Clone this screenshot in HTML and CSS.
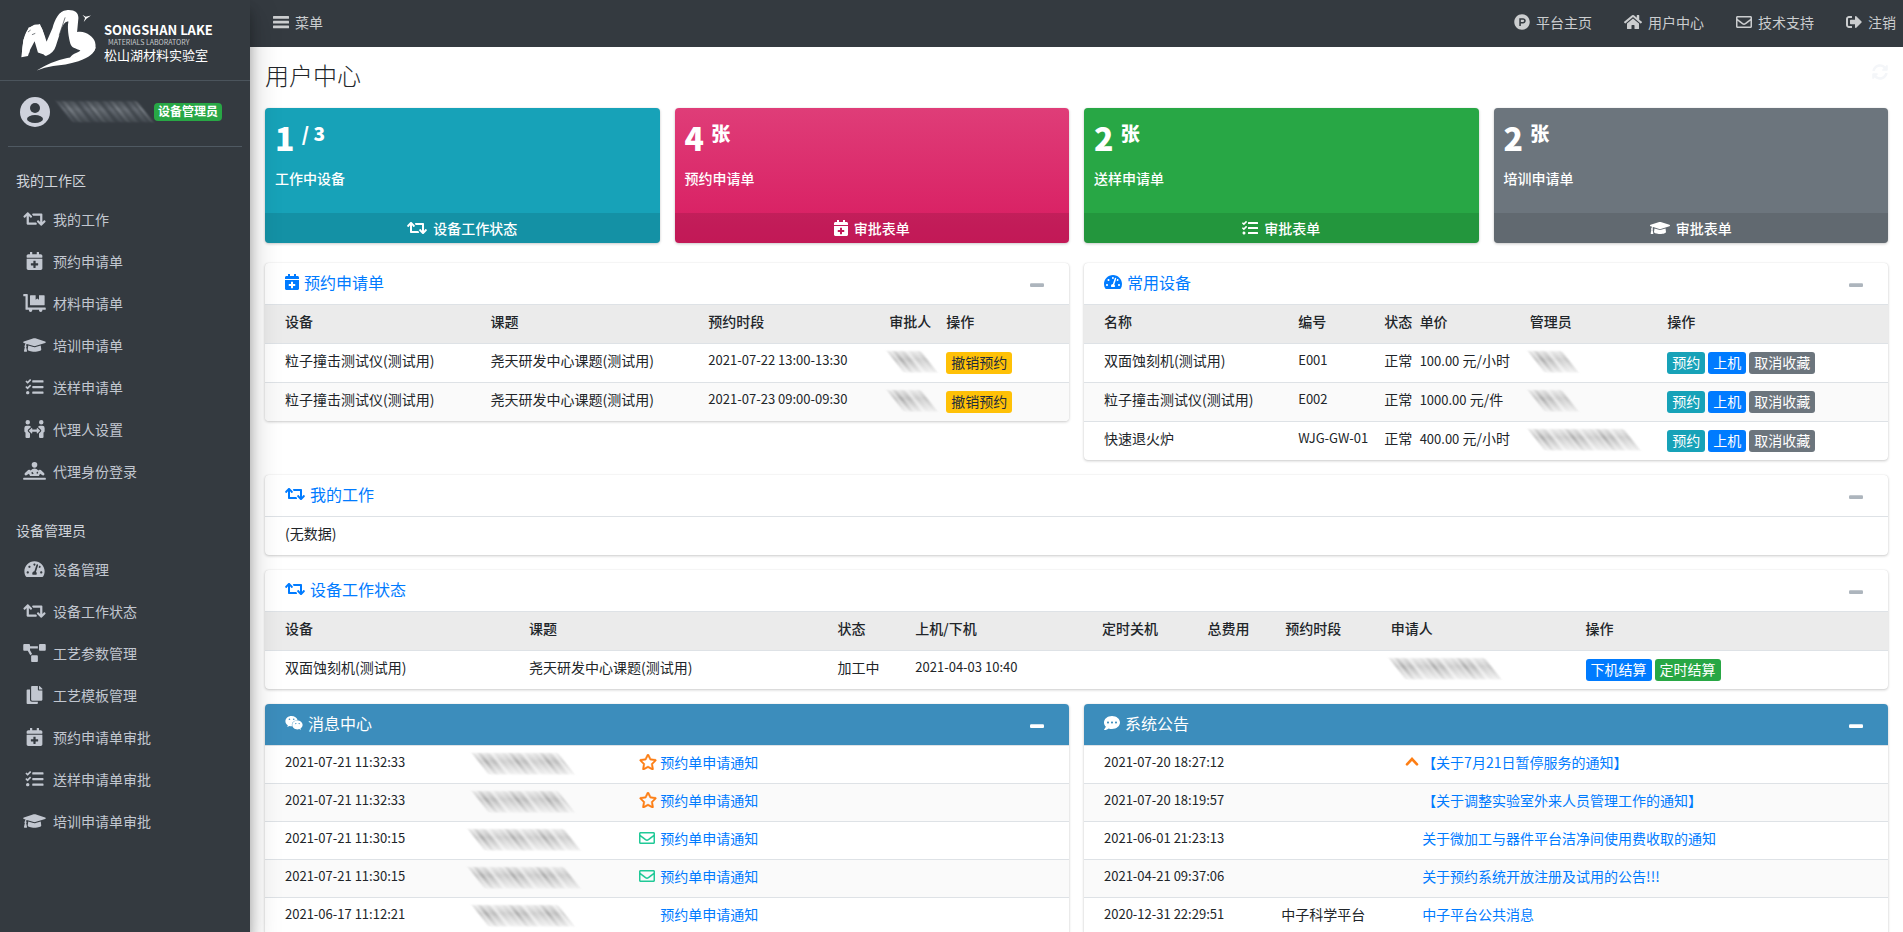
FILE: index.html
```html
<!DOCTYPE html>
<html lang="zh-CN">
<head>
<meta charset="utf-8">
<title>用户中心</title>
<link rel="stylesheet" href="styles.css">
</head>
<body>
<svg class="sprite" aria-hidden="true">
  <symbol id="retweet" viewBox="0 0 640 512"><path d="M629.657 343.598L528.971 444.284c-9.373 9.372-24.568 9.372-33.941 0L394.343 343.598c-9.373-9.373-9.373-24.569 0-33.941l10.823-10.823c9.562-9.562 25.133-9.34 34.419.492L480 342.118V160H292.451a24.005 24.005 0 0 1-16.971-7.029l-16-16C244.361 121.851 255.069 96 276.451 96H520c13.255 0 24 10.745 24 24v222.118l40.416-42.792c9.285-9.831 24.856-10.054 34.419-.492l10.823 10.823c9.372 9.372 9.372 24.569-.001 33.941zm-265.138 15.431A23.999 23.999 0 0 0 347.548 352H160V169.881l40.416 42.792c9.286 9.831 24.856 10.054 34.419.491l10.822-10.822c9.373-9.373 9.373-24.569 0-33.941L144.971 67.716c-9.373-9.373-24.569-9.373-33.941 0L10.343 168.402c-9.373 9.373-9.373 24.569 0 33.941l10.822 10.822c9.562 9.562 25.133 9.34 34.419-.491L96 169.881V392c0 13.255 10.745 24 24 24h243.549c21.382 0 32.09-25.851 16.971-40.971l-16.001-16z"/></symbol>
  <symbol id="calendar" viewBox="0 0 448 512"><path d="M436 160H12c-6.6 0-12-5.4-12-12v-36c0-26.5 21.5-48 48-48h48V12c0-6.6 5.4-12 12-12h40c6.6 0 12 5.4 12 12v52h128V12c0-6.6 5.4-12 12-12h40c6.6 0 12 5.4 12 12v52h48c26.5 0 48 21.5 48 48v36c0 6.6-5.4 12-12 12zM12 192h424c6.6 0 12 5.4 12 12v260c0 26.5-21.5 48-48 48H48c-26.5 0-48-21.5-48-48V204c0-6.6 5.4-12 12-12zm316 140c0-6.6-5.4-12-12-12h-60v-60c0-6.6-5.4-12-12-12h-40c-6.6 0-12 5.4-12 12v60h-60c-6.6 0-12 5.4-12 12v40c0 6.6 5.4 12 12 12h60v60c0 6.6 5.4 12 12 12h40c6.6 0 12-5.4 12-12v-60h60c6.6 0 12-5.4 12-12v-40z"/></symbol>
  <symbol id="dolly" viewBox="0 0 640 512"><path d="M208 320h384c8.800 0 16-7.200 16-16V48c0-8.800-7.200-16-16-16H448v128l-48-32-48 32V32H208c-8.800 0-16 7.200-16 16v256c0 8.800 7.200 16 16 16zm416 64H128V16c0-8.800-7.200-16-16-16H16C7.200 0 0 7.200 0 16v32c0 8.800 7.200 16 16 16h48v368c0 8.800 7.200 16 16 16h82.900c-1.800 5-2.900 10.400-2.900 16 0 26.500 21.500 48 48 48s48-21.500 48-48c0-5.600-1.200-11-2.900-16H451c-1.800 5-2.900 10.400-2.900 16 0 26.500 21.500 48 48 48s48-21.500 48-48c0-5.600-1.200-11-2.900-16H624c8.800 0 16-7.200 16-16v-32c0-8.800-7.200-16-16-16z"/></symbol>
  <symbol id="cap" viewBox="0 0 640 512"><path d="M622.340 153.200L343.400 67.500c-15.200-4.670-31.600-4.670-46.790 0L17.660 153.200c-23.540 7.230-23.540 38.360 0 45.590l48.630 14.940c-10.670 13.190-17.230 29.280-17.880 46.900C38.780 266.150 32 276.110 32 288c0 10.780 5.680 19.850 13.860 25.650L20.330 428.530C18.110 438.520 25.710 448 35.940 448h56.110c10.240 0 17.840-9.480 15.620-19.470L82.140 313.650C90.320 307.850 96 298.780 96 288c0-11.570-6.470-21.250-15.660-26.870.76-15.020 8.440-28.300 20.690-36.720L296.600 284.500c9.060 2.780 26.440 6.250 46.790 0l278.950-85.700c23.550-7.240 23.550-38.360 0-45.600zM352.790 315.090c-28.530 8.760-52.840 3.920-65.590 0l-145.020-44.550L128 384c0 35.350 85.960 64 192 64s192-28.650 192-64l-14.180-113.470-145.030 44.560z"/></symbol>
  <symbol id="tasks" viewBox="0 0 512 512"><path d="M139.610 35.500a12 12 0 0 0-17 0L58.930 98.810l-22.700-22.120a12 12 0 0 0-17 0L3.530 92.410a12 12 0 0 0 0 17l47.590 47.400a12.780 12.780 0 0 0 17.610 0l15.590-15.620L156.520 69a12.090 12.090 0 0 0 .09-17zm0 159.190a12 12 0 0 0-17 0l-63.680 63.720-22.700-22.100a12 12 0 0 0-17 0L3.530 252a12 12 0 0 0 0 17L51 316.500a12.770 12.770 0 0 0 17.600 0l15.700-15.690 72.200-72.220a12 12 0 0 0 .09-16.900zM64 368c-26.490 0-48.590 21.500-48.590 48S37.530 464 64 464a48 48 0 0 0 0-96zm432 16H208a16 16 0 0 0-16 16v32a16 16 0 0 0 16 16h288a16 16 0 0 0 16-16v-32a16 16 0 0 0-16-16zm0-320H208a16 16 0 0 0-16 16v32a16 16 0 0 0 16 16h288a16 16 0 0 0 16-16V80a16 16 0 0 0-16-16zm0 160H208a16 16 0 0 0-16 16v32a16 16 0 0 0 16 16h288a16 16 0 0 0 16-16v-32a16 16 0 0 0-16-16z"/></symbol>
  <symbol id="people" viewBox="0 0 576 512"><path d="M96 128A64 64 0 1 0 32 64a64 64 0 0 0 64 64zm0 176.080a44.110 44.110 0 0 1 13.640-32L181.770 204c1.650-1.550 3.770-2.310 5.610-3.570A63.910 63.910 0 0 0 128 160H64A64 64 0 0 0 0 224v96a32 32 0 0 0 32 32v128a32 32 0 0 0 32 32h64a32 32 0 0 0 32-32V383.610l-50.360-47.530A44.080 44.080 0 0 1 96 304.080zM480 128a64 64 0 1 0-64-64 64 64 0 0 0 64 64zm32 32h-64a63.910 63.910 0 0 0-59.380 40.420c1.840 1.270 4 2 5.620 3.590l72.120 68.060a44.370 44.370 0 0 1 0 64L416 383.620V480a32 32 0 0 0 32 32h64a32 32 0 0 0 32-32V352a32 32 0 0 0 32-32v-96a64 64 0 0 0-64-64zM444.400 295.340l-72.120-68.060A12 12 0 0 0 352 236v36H224v-36a12 12 0 0 0-20.280-8.730L131.600 295.340a12.400 12.400 0 0 0 0 17.470l72.120 68.070A12 12 0 0 0 224 372.140V336h128v36.140a12 12 0 0 0 20.280 8.740l72.120-68.070a12.400 12.400 0 0 0 0-17.470z"/></symbol>
  <symbol id="counter" viewBox="0 0 640 512"><circle cx="320" cy="80" r="80"/><path fill-rule="evenodd" d="M46 372q-24-30 4-62l90-82q18-16 38-8l34 24q46-60 108-60t108 60l34-24q20-8 38 8l90 82q28 32 4 62-20 20-46 4l-70-42-34 66H196l-34-66-70 42q-26 16-46-4zM224 310l44 40 28-20-40-52zm150-6 30-36 24 40-34 30z"/><rect y="448" width="640" height="60" rx="16"/></symbol>
  <symbol id="gauge" viewBox="0 0 576 512"><path d="M288 32C128.940 32 0 160.940 0 320c0 52.800 14.250 102.260 39.060 144.800 5.610 9.620 16.300 15.200 27.440 15.200h443c11.140 0 21.830-5.580 27.440-15.200C561.750 422.260 576 372.800 576 320c0-159.060-128.940-288-288-288zm0 64c14.710 0 26.580 10.130 30.320 23.650-1.110 2.260-2.640 4.230-3.450 6.670l-9.220 27.670c-5.130 3.490-10.970 6.010-17.640 6.010-17.670 0-32-14.330-32-32S270.330 96 288 96zM96 384c-17.670 0-32-14.330-32-32s14.330-32 32-32 32 14.330 32 32-14.330 32-32 32zm48-160c-17.670 0-32-14.330-32-32s14.330-32 32-32 32 14.330 32 32-14.330 32-32 32zm246.770-72.410l-61.330 184C343.130 347.330 352 364.540 352 384c0 11.720-3.380 22.550-8.880 32H232.880c-5.500-9.450-8.880-20.280-8.880-32 0-33.940 26.500-61.430 59.900-63.590l61.340-184.010c4.170-12.560 17.730-19.450 30.360-15.170 12.570 4.190 19.350 17.790 15.170 30.360zm14.660 57.200l15.520-46.550c3.470-1.290 7.130-2.230 11.050-2.230 17.670 0 32 14.330 32 32s-14.330 32-32 32c-11.380-.010-20.890-6.280-26.570-15.220zM480 384c-17.670 0-32-14.330-32-32s14.330-32 32-32 32 14.330 32 32-14.330 32-32 32z"/></symbol>
  <symbol id="diagram" viewBox="0 0 640 512"><path d="M384 320H256c-17.670 0-32 14.330-32 32v128c0 17.670 14.330 32 32 32h128c17.670 0 32-14.330 32-32V352c0-17.670-14.330-32-32-32zM192 32c0-17.670-14.330-32-32-32H32C14.330 0 0 14.330 0 32v128c0 17.670 14.330 32 32 32h95.720l73.160 128.040C211.980 300.980 232.400 288 256 288h.28L192 175.510V128h224V64H192V32zM608 0H480c-17.670 0-32 14.330-32 32v128c0 17.670 14.330 32 32 32h128c17.670 0 32-14.330 32-32V32c0-17.670-14.330-32-32-32z"/></symbol>
  <symbol id="copy" viewBox="0 0 448 512"><path d="M320 448v40c0 13.255-10.745 24-24 24H24c-13.255 0-24-10.745-24-24V120c0-13.255 10.745-24 24-24h72v296c0 30.879 25.121 56 56 56h168zm0-344V0H152c-13.255 0-24 10.745-24 24v368c0 13.255 10.745 24 24 24h272c13.255 0 24-10.745 24-24V128H344c-13.200 0-24-10.800-24-24zm120.971-31.029L375.029 7.029A24 24 0 0 0 358.059 0H352v96h96v-6.059a24 24 0 0 0-7.029-16.970z"/></symbol>
  <symbol id="home" viewBox="0 0 576 512"><path d="M280.370 148.260L96 300.110V464a16 16 0 0 0 16 16l112.060-.29a16 16 0 0 0 15.920-16V368a16 16 0 0 1 16-16h64a16 16 0 0 1 16 16v95.640a16 16 0 0 0 16 16.050L464 480a16 16 0 0 0 16-16V300L295.670 148.260a12.190 12.190 0 0 0-15.300 0zM571.600 251.470L488 182.560V44.050a12 12 0 0 0-12-12h-56a12 12 0 0 0-12 12v72.610L318.470 43a48 48 0 0 0-61 0L4.340 251.470a12 12 0 0 0-1.600 16.900l25.500 31A12 12 0 0 0 45.150 301l235.220-193.740a12.190 12.190 0 0 1 15.300 0L530.900 301a12 12 0 0 0 16.900-1.600l25.500-31a12 12 0 0 0-1.700-16.930z"/></symbol>
  <symbol id="mail" viewBox="0 0 512 512"><path d="M464 64H48C21.490 64 0 85.490 0 112v288c0 26.510 21.490 48 48 48h416c26.510 0 48-21.490 48-48V112c0-26.510-21.490-48-48-48zm0 48v40.805c-22.422 18.259-58.168 46.651-134.587 106.490-16.841 13.247-50.201 45.072-73.413 44.701-23.208.375-56.579-31.459-73.413-44.701C106.180 199.465 70.425 171.067 48 152.805V112h416zM48 400V214.398c22.914 18.251 55.409 43.862 104.938 82.646 21.857 17.205 60.134 55.186 103.062 54.955 42.717.231 80.509-37.199 103.053-54.947 49.528-38.783 82.032-64.401 104.947-82.653V400H48z"/></symbol>
  <symbol id="exit" viewBox="0 0 512 512"><path d="M497 273L329 441c-15 15-41 4.500-41-17v-96H152c-13.300 0-24-10.700-24-24v-96c0-13.300 10.700-24 24-24h136V88c0-21.400 25.900-32 41-17l168 168c9.300 9.400 9.300 24.600 0 34zM192 436v-40c0-6.600-5.400-12-12-12H96c-17.700 0-32-14.300-32-32V160c0-17.700 14.300-32 32-32h84c6.600 0 12-5.400 12-12V76c0-6.600-5.400-12-12-12H96c-53 0-96 43-96 96v192c0 53 43 96 96 96h84c6.600 0 12-5.400 12-12z"/></symbol>
  <symbol id="star" viewBox="0 0 576 512"><path stroke="currentColor" stroke-width="14" d="M528.100 171.500L382 150.200 316.700 17.800c-11.700-23.600-45.600-23.900-57.400 0L194 150.200 47.900 171.500c-26.200 3.800-36.700 36.100-17.700 54.600l105.700 103-25 145.500c-4.500 26.300 23.200 46 46.400 33.700L288 439.600l130.700 68.700c23.200 12.200 50.900-7.400 46.400-33.700l-25-145.500 105.700-103c19-18.500 8.500-50.800-17.700-54.600zM388.600 312.300l23.700 138.400L288 385.400l-124.300 65.300 23.700-138.400-100.600-98 139-20.200 62.200-126 62.200 126 139 20.200-100.600 98z"/></symbol>
  <symbol id="bars" viewBox="0 0 512 512"><rect y="60" width="512" height="88" rx="16"/><rect y="212" width="512" height="88" rx="16"/><rect y="364" width="512" height="88" rx="16"/></symbol>
  <symbol id="platform" viewBox="0 0 512 512"><path d="M326.300 218.800c0 20.500-16.700 37.200-37.200 37.200h-70.300v-74.400h70.300c20.500 0 37.200 16.700 37.200 37.200zM504 256c0 137-111 248-248 248S8 393 8 256 119 8 256 8s248 111 248 248zm-128.100-37.200c0-47.900-38.900-86.800-86.800-86.800H169.200v248h49.600v-74.400h70.300c47.900 0 86.800-38.900 86.800-86.800z"/></symbol>
  <symbol id="sync" viewBox="0 0 512 512"><path d="M370.720 133.280C339.458 104.008 298.888 87.962 255.848 88c-77.458.068-144.328 53.178-162.791 126.850-1.344 5.363-6.122 9.150-11.651 9.150H24.103c-7.498 0-13.194-6.807-11.807-14.176C33.933 94.924 134.813 8 256 8c66.448 0 126.791 26.136 171.315 68.685L463.030 40.970C478.149 25.851 504 36.559 504 57.941V192c0 13.255-10.745 24-24 24H345.941c-21.382 0-32.090-25.851-16.971-40.971l41.750-41.749zM32 296h134.059c21.382 0 32.090 25.851 16.971 40.971l-41.750 41.750c31.262 29.273 71.835 45.319 114.876 45.280 77.418-.070 144.315-53.144 162.787-126.849 1.344-5.363 6.122-9.150 11.651-9.150h57.304c7.498 0 13.194 6.807 11.807 14.176C478.067 417.076 377.187 504 256 504c-66.448 0-126.791-26.136-171.315-68.685L48.970 471.030C33.851 486.149 8 475.441 8 454.059V320c0-13.255 10.745-24 24-24z"/></symbol>
  <symbol id="weixin" viewBox="0 0 576 512"><path d="M385.200 167.600c6.400 0 12.600.3 18.800 1.100C387.400 90.300 303.300 32 207.700 32 100.500 32 13 104.800 13 197.400c0 53.400 29.300 97.500 77.900 131.600l-19.300 58.600 68-34.100c24.400 4.800 43.800 9.700 68.200 9.700 6.200 0 12.100-.3 18.300-.8-4-12.900-6.200-26.600-6.200-40.800-.1-84.900 72.900-154 165.300-154zm-104.500-52.900c14.500 0 24.200 9.700 24.200 24.400 0 14.500-9.700 24.200-24.200 24.200-14.800 0-29.300-9.700-29.300-24.200.1-14.700 14.600-24.400 29.300-24.400zm-136.400 48.600c-14.500 0-29.300-9.700-29.300-24.200 0-14.800 14.800-24.400 29.300-24.400 14.800 0 24.400 9.700 24.400 24.400 0 14.600-9.600 24.200-24.400 24.200zM563 319.400c0-77.900-77.900-141.300-165.400-141.300-92.700 0-165.400 63.400-165.400 141.300S305 460.700 397.600 460.700c19.300 0 38.900-5.100 58.600-9.900l53.400 29.300-14.800-48.600C534 402.100 563 363.200 563 319.400zm-219.100-24.500c-9.700 0-19.300-9.700-19.300-19.600 0-9.700 9.700-19.300 19.300-19.300 14.800 0 24.400 9.700 24.400 19.300 0 10-9.700 19.600-24.400 19.600zm107.100 0c-9.700 0-19.300-9.700-19.300-19.600 0-9.700 9.700-19.300 19.300-19.300 14.500 0 24.400 9.700 24.400 19.300.1 10-9.900 19.600-24.400 19.600z"/></symbol>
  <symbol id="comment" viewBox="0 0 512 512"><path d="M256 32C114.600 32 0 125.100 0 240c0 49.600 21.400 95 57 130.700C44.500 421.100 2.700 466 2.200 466.500c-2.200 2.300-2.800 5.700-1.500 8.700S4.800 480 8 480c66.300 0 116-31.800 140.600-51.400 32.700 12.300 69 19.400 107.400 19.400 141.400 0 256-93.100 256-208S397.400 32 256 32zM128 272c-17.700 0-32-14.300-32-32s14.300-32 32-32 32 14.300 32 32-14.300 32-32 32zm128 0c-17.700 0-32-14.300-32-32s14.300-32 32-32 32 14.300 32 32-14.300 32-32 32zm128 0c-17.700 0-32-14.300-32-32s14.300-32 32-32 32 14.300 32 32-14.300 32-32 32z"/></symbol>
  <symbol id="minus" viewBox="0 0 448 512"><rect y="196" width="448" height="124" rx="36"/></symbol>
  <symbol id="up" viewBox="0 0 448 512"><path d="M64 330 224 160l160 170" fill="none" stroke="currentColor" stroke-width="84" stroke-linecap="round"/></symbol>
</svg>
<div class="app">
  <aside class="sidebar">
    <a class="brand" href="#">
      <svg class="brand-mark" viewBox="60 24 232 192" aria-hidden="true">
        <path d="M77 158C80 116 86 94 106 85C124 80 119 122 134 150" fill="none" stroke="#fff" stroke-width="22"/>
        <path d="M64 172l6-52 16-38 34-10 14 34 12 38-14 20-18-6-10-34-14 26-6 18zM138 168c-14-4-10-20 0-38L158 84C164 60 178 30 200 30c24-2 36 6 36 24l-4 42c24-6 50 14 54 30 6 24-4 34-24 36-20 6-44 8-52 16 2-16 24-18 32-26-14-8-24-6-30-20-6-22-10-50-6-68-10 0-16 8-22 24l-16 50c-4 14-14 24-30 30z" fill="#fff"/>
        <path d="M110 212q44-28 92-38 50-6 62-30l24-2q-4 26-52 42-40 12-76 14-26 4-50 14zM248 44l10 6 16-4-14 10-8 10 4-12z" fill="#fff"/>
        <path d="M96 104l10-4M84 96l8-6M196 52l-18 54M204 150l16 4" stroke="#343a40" stroke-width="2"/>
      </svg>
      <span class="brand-text">
        <strong class="brand-en">SONGSHAN LAKE</strong>
        <span class="brand-sub">MATERIALS LABORATORY</span>
        <span class="brand-cn">松山湖材料实验室</span>
      </span>
    </a>
    <div class="user">
      <svg class="avatar" viewBox="0 0 30 30" aria-hidden="true"><circle cx="15" cy="15" r="15" fill="#cfd2dc"/><circle cx="15" cy="11" r="5" fill="#343a40"/><ellipse cx="15" cy="22" rx="8" ry="4" fill="#343a40"/></svg>
      <span class="smudge smudge-dark w-name"></span>
      <span class="role">设备管理员</span>
    </div>
    <nav class="menu">
      <h2 class="menu-title">我的工作区</h2>
      <a class="menu-item" href="#"><svg class="icon"><use href="#retweet"/></svg>我的工作</a>
      <a class="menu-item" href="#"><svg class="icon"><use href="#calendar"/></svg>预约申请单</a>
      <a class="menu-item" href="#"><svg class="icon"><use href="#dolly"/></svg>材料申请单</a>
      <a class="menu-item" href="#"><svg class="icon"><use href="#cap"/></svg>培训申请单</a>
      <a class="menu-item" href="#"><svg class="icon"><use href="#tasks"/></svg>送样申请单</a>
      <a class="menu-item" href="#"><svg class="icon"><use href="#people"/></svg>代理人设置</a>
      <a class="menu-item" href="#"><svg class="icon"><use href="#counter"/></svg>代理身份登录</a>
      <h2 class="menu-title">设备管理员</h2>
      <a class="menu-item" href="#"><svg class="icon"><use href="#gauge"/></svg>设备管理</a>
      <a class="menu-item" href="#"><svg class="icon"><use href="#retweet"/></svg>设备工作状态</a>
      <a class="menu-item" href="#"><svg class="icon"><use href="#diagram"/></svg>工艺参数管理</a>
      <a class="menu-item" href="#"><svg class="icon"><use href="#copy"/></svg>工艺模板管理</a>
      <a class="menu-item" href="#"><svg class="icon"><use href="#calendar"/></svg>预约申请单审批</a>
      <a class="menu-item" href="#"><svg class="icon"><use href="#tasks"/></svg>送样申请单审批</a>
      <a class="menu-item" href="#"><svg class="icon"><use href="#cap"/></svg>培训申请单审批</a>
    </nav>
  </aside>
  <div class="page">
    <header class="topbar">
      <a class="top-link" href="#"><svg class="icon i-16"><use href="#bars"/></svg>菜单</a>
      <nav class="top-nav">
        <a class="top-link" href="#"><svg class="icon i-16"><use href="#platform"/></svg>平台主页</a>
        <a class="top-link" href="#"><svg class="icon i-18"><use href="#home"/></svg>用户中心</a>
        <a class="top-link" href="#"><svg class="icon i-16"><use href="#mail"/></svg>技术支持</a>
        <a class="top-link" href="#"><svg class="icon i-16"><use href="#exit"/></svg>注销</a>
      </nav>
    </header>
    <main class="content">
      <div class="page-head">
        <h1 class="page-title">用户中心</h1>
        <button class="refresh" type="button" aria-label="刷新"><svg class="icon i-16"><use href="#sync"/></svg></button>
      </div>
      <section class="boxes">
        <article class="box box-info">
          <div class="box-body"><p class="box-num">1 <sup>/ 3</sup></p><p class="box-label">工作中设备</p></div>
          <a class="box-foot" href="#"><svg class="icon i-20"><use href="#retweet"/></svg>设备工作状态</a>
        </article>
        <article class="box box-maroon">
          <div class="box-body"><p class="box-num">4 <sup>张</sup></p><p class="box-label">预约申请单</p></div>
          <a class="box-foot" href="#"><svg class="icon i-14"><use href="#calendar"/></svg>审批表单</a>
        </article>
        <article class="box box-success">
          <div class="box-body"><p class="box-num">2 <sup>张</sup></p><p class="box-label">送样申请单</p></div>
          <a class="box-foot" href="#"><svg class="icon i-16"><use href="#tasks"/></svg>审批表单</a>
        </article>
        <article class="box box-gray">
          <div class="box-body"><p class="box-num">2 <sup>张</sup></p><p class="box-label">培训申请单</p></div>
          <a class="box-foot" href="#"><svg class="icon i-20"><use href="#cap"/></svg>审批表单</a>
        </article>
      </section>

      <div class="pair">
        <section class="card">
          <header class="card-head">
            <h2 class="card-title"><svg class="icon i-14"><use href="#calendar"/></svg>预约申请单</h2>
            <button class="collapse" type="button" aria-label="折叠"><svg class="icon i-14"><use href="#minus"/></svg></button>
          </header>
          <table class="grid t-book">
            <colgroup><col><col><col><col><col></colgroup>
            <thead><tr><th>设备</th><th>课题</th><th>预约时段</th><th>审批人</th><th>操作</th></tr></thead>
            <tbody>
              <tr><td>粒子撞击测试仪(测试用)</td><td>尧天研发中心课题(测试用)</td><td class="num">2021-07-22 13:00-13:30</td><td><span class="smudge w-short"></span></td><td class="act"><button class="btn yellow" type="button">撤销预约</button></td></tr>
              <tr><td>粒子撞击测试仪(测试用)</td><td>尧天研发中心课题(测试用)</td><td class="num">2021-07-23 09:00-09:30</td><td><span class="smudge w-short"></span></td><td class="act"><button class="btn yellow" type="button">撤销预约</button></td></tr>
            </tbody>
          </table>
        </section>
        <section class="card">
          <header class="card-head">
            <h2 class="card-title"><svg class="icon i-18"><use href="#gauge"/></svg>常用设备</h2>
            <button class="collapse" type="button" aria-label="折叠"><svg class="icon i-14"><use href="#minus"/></svg></button>
          </header>
          <table class="grid t-dev">
            <colgroup><col><col><col><col><col><col></colgroup>
            <thead><tr><th>名称</th><th>编号</th><th>状态</th><th>单价</th><th>管理员</th><th>操作</th></tr></thead>
            <tbody>
              <tr><td>双面蚀刻机(测试用)</td><td class="num">E001</td><td>正常</td><td><span class="num">100.00</span> 元/小时</td><td><span class="smudge w-short"></span></td><td class="act"><div class="btns"><button class="btn teal" type="button">预约</button><button class="btn blue" type="button">上机</button><button class="btn gray" type="button">取消收藏</button></div></td></tr>
              <tr><td>粒子撞击测试仪(测试用)</td><td class="num">E002</td><td>正常</td><td><span class="num">1000.00</span> 元/件</td><td><span class="smudge w-short"></span></td><td class="act"><div class="btns"><button class="btn teal" type="button">预约</button><button class="btn blue" type="button">上机</button><button class="btn gray" type="button">取消收藏</button></div></td></tr>
              <tr><td>快速退火炉</td><td class="num">WJG-GW-01</td><td>正常</td><td><span class="num">400.00</span> 元/小时</td><td><span class="smudge w-long"></span></td><td class="act"><div class="btns"><button class="btn teal" type="button">预约</button><button class="btn blue" type="button">上机</button><button class="btn gray" type="button">取消收藏</button></div></td></tr>
            </tbody>
          </table>
        </section>
      </div>

      <section class="card">
        <header class="card-head">
          <h2 class="card-title"><svg class="icon i-20"><use href="#retweet"/></svg>我的工作</h2>
          <button class="collapse" type="button" aria-label="折叠"><svg class="icon i-14"><use href="#minus"/></svg></button>
        </header>
        <p class="empty">(无数据)</p>
      </section>

      <section class="card">
        <header class="card-head">
          <h2 class="card-title"><svg class="icon i-20"><use href="#retweet"/></svg>设备工作状态</h2>
          <button class="collapse" type="button" aria-label="折叠"><svg class="icon i-14"><use href="#minus"/></svg></button>
        </header>
        <table class="grid t-state">
          <colgroup><col><col><col><col><col><col><col><col><col></colgroup>
          <thead><tr><th>设备</th><th>课题</th><th>状态</th><th>上机/下机</th><th>定时关机</th><th>总费用</th><th>预约时段</th><th>申请人</th><th>操作</th></tr></thead>
          <tbody>
            <tr><td>双面蚀刻机(测试用)</td><td>尧天研发中心课题(测试用)</td><td>加工中</td><td class="num">2021-04-03 10:40</td><td></td><td></td><td></td><td><span class="smudge w-long"></span></td><td class="act"><div class="btns"><button class="btn blue" type="button">下机结算</button><button class="btn green" type="button">定时结算</button></div></td></tr>
          </tbody>
        </table>
      </section>

      <div class="pair">
        <section class="card card-blue">
          <header class="card-head">
            <h2 class="card-title"><svg class="icon i-18"><use href="#weixin"/></svg>消息中心</h2>
            <button class="collapse" type="button" aria-label="折叠"><svg class="icon i-14"><use href="#minus"/></svg></button>
          </header>
          <table class="grid feed t-msg">
            <colgroup><col><col><col></colgroup>
            <tbody>
              <tr><td class="num">2021-07-21 11:32:33</td><td><span class="smudge w-mid"></span></td><td><a class="note" href="#"><span class="flag orange"><svg class="icon i-18"><use href="#star"/></svg></span>预约单申请通知</a></td></tr>
              <tr><td class="num">2021-07-21 11:32:33</td><td><span class="smudge w-mid"></span></td><td><a class="note" href="#"><span class="flag orange"><svg class="icon i-18"><use href="#star"/></svg></span>预约单申请通知</a></td></tr>
              <tr><td class="num">2021-07-21 11:30:15</td><td><span class="smudge w-long"></span></td><td><a class="note" href="#"><span class="flag mint"><svg class="icon i-16"><use href="#mail"/></svg></span>预约单申请通知</a></td></tr>
              <tr><td class="num">2021-07-21 11:30:15</td><td><span class="smudge w-long"></span></td><td><a class="note" href="#"><span class="flag mint"><svg class="icon i-16"><use href="#mail"/></svg></span>预约单申请通知</a></td></tr>
              <tr><td class="num">2021-06-17 11:12:21</td><td><span class="smudge w-mid"></span></td><td><a class="note" href="#"><span class="flag"></span>预约单申请通知</a></td></tr>
            </tbody>
          </table>
        </section>
        <section class="card card-blue">
          <header class="card-head">
            <h2 class="card-title"><svg class="icon i-16"><use href="#comment"/></svg>系统公告</h2>
            <button class="collapse" type="button" aria-label="折叠"><svg class="icon i-14"><use href="#minus"/></svg></button>
          </header>
          <table class="grid feed t-notice">
            <colgroup><col><col><col></colgroup>
            <tbody>
              <tr><td class="num">2021-07-20 18:27:12</td><td></td><td><a class="note" href="#"><span class="flag flag-end orange"><svg class="icon i-16"><use href="#up"/></svg></span>【关于7月21日暂停服务的通知】</a></td></tr>
              <tr><td class="num">2021-07-20 18:19:57</td><td></td><td><a class="note" href="#"><span class="flag"></span>【关于调整实验室外来人员管理工作的通知】</a></td></tr>
              <tr><td class="num">2021-06-01 21:23:13</td><td></td><td><a class="note" href="#"><span class="flag"></span>关于微加工与器件平台洁净间使用费收取的通知</a></td></tr>
              <tr><td class="num">2021-04-21 09:37:06</td><td></td><td><a class="note" href="#"><span class="flag"></span>关于预约系统开放注册及试用的公告!!!</a></td></tr>
              <tr><td class="num">2020-12-31 22:29:51</td><td>中子科学平台</td><td><a class="note" href="#"><span class="flag"></span>中子平台公共消息</a></td></tr>
            </tbody>
          </table>
        </section>
      </div>
    </main>
  </div>
</div>
</body>
</html>
```
FILE: styles.css
```css
* { box-sizing: border-box; }

body {
  margin: 0;
  font-family: "Noto Sans CJK SC", "Noto Sans", sans-serif;
  font-size: 14px;
  line-height: 20px;
  color: #212529;
  background: #fff;
}

h1, h2, p { margin: 0; font-weight: 400; }
a { color: inherit; text-decoration: none; }
button { font: inherit; border: 0; background: none; cursor: pointer; }

.sprite { display: none; }
.icon { width: 16px; height: 16px; fill: currentColor; flex: none; display: block; }
.i-14 { width: 14px; }
.i-16 { width: 16px; }
.i-18 { width: 18px; }
.i-20 { width: 20px; }

.app { display: flex; height: 100vh; overflow: hidden; }

/* Sidebar */
.sidebar {
  flex: 0 0 250px;
  background: #343a40;
  color: #c2c7d0;
  z-index: 2;
  box-shadow: 0 14px 28px rgba(0, 0, 0, .25), 0 10px 10px rgba(0, 0, 0, .22);
}
.brand {
  display: flex;
  align-items: center;
  gap: 7px;
  height: 81px;
  padding-left: 20px;
  border-bottom: 1px solid #4b545c;
  color: #fff;
}
.brand-mark { width: 77px; height: 64px; flex: none; }
.brand-text { display: flex; flex-direction: column; padding-top: 4px; white-space: nowrap; }
.brand-en { font-size: 13px; line-height: 18px; font-weight: 700; }
.brand-sub { padding-left: 4px; font-size: 7px; line-height: 7px; color: #c6c9cb; }
.brand-cn { font-size: 13px; line-height: 18px; }

.user {
  display: flex;
  align-items: center;
  height: 66px;
  margin: 0 8px;
  padding: 0 0 4px 12px;
  border-bottom: 1px solid #4f5962;
}
.avatar { width: 30px; height: 30px; margin-right: 7px; }
.role {
  margin-left: 2px;
  padding: 0 4px 2px;
  border-radius: 4px;
  background: #28a745;
  color: #fff;
  font-size: 12px;
  line-height: 16px;
  font-weight: 700;
}

.menu-title { padding: 23px 16px 8px; font-size: 14px; line-height: 20px; color: #d0d4db; }
.menu-item { display: flex; align-items: center; gap: 7px; height: 42px; padding-left: 23px; }
.menu-item .icon { width: 23px; height: 18px; }
.menu-item + .menu-title { padding-top: 28px; }

/* Top bar */
.page { flex: 1; min-width: 0; }
.topbar {
  display: flex;
  justify-content: space-between;
  align-items: center;
  height: 47px;
  padding: 0 7px 3px 23px;
  background: #343a40;
  color: #cbcdcf;
}
.top-nav { display: flex; gap: 32px; }
.top-link { display: flex; align-items: center; gap: 6px; }

/* Content */
.content { padding: 0 15px; }
.page-head { display: flex; align-items: center; justify-content: space-between; height: 61px; padding-bottom: 6px; }
.page-title { font-size: 24px; line-height: 32px; font-weight: 300; }
.refresh { padding: 0 0 6px; color: #f4f6f9; }

.boxes { display: grid; grid-template-columns: repeat(4, 1fr); gap: 15px; margin-bottom: 20px; }
.box {
  border-radius: 4px;
  overflow: hidden;
  color: #fff;
  box-shadow: 0 0 1px rgba(0, 0, 0, .13), 0 1px 3px rgba(0, 0, 0, .2);
}
.box-info { background: #17a2b8; }
.box-maroon { background: linear-gradient(#df3d78, #d81b60); }
.box-success { background: #28a745; }
.box-gray { background: #6c757d; }
.box-body { height: 105px; padding: 8px 10px; }
.box-num { font-size: 32px; line-height: 42px; font-weight: 900; margin-bottom: 10px; }
.box-num sup { font-size: 19px; line-height: 20px; vertical-align: 10px; }
.box-label { font-weight: 500; }
.box-foot {
  display: flex;
  align-items: center;
  justify-content: center;
  gap: 6px;
  height: 30px;
  padding-bottom: 1px;
  background: rgba(0, 0, 0, .1);
  font-weight: 500;
}

.pair { display: grid; grid-template-columns: 1fr 1fr; gap: 15px; align-items: start; }
.card {
  min-width: 0;
  margin-bottom: 15px;
  border-radius: 4px;
  background: #fff;
  overflow: hidden;
  box-shadow: 0 0 1px rgba(0, 0, 0, .13), 0 1px 3px rgba(0, 0, 0, .2);
}
.card-head {
  display: flex;
  align-items: center;
  justify-content: space-between;
  height: 41px;
  padding: 0 25px 0 20px;
}
.card-title { display: flex; align-items: center; gap: 5px; padding-bottom: 3px; font-size: 16px; line-height: 24px; color: #007bff; }
.collapse { padding: 3px 0 0; color: #adb5bd; }
.card-blue .card-head { background: #3c8dbc; }
.card-blue .card-title, .card-blue .collapse { color: #fff; }
.empty { height: 39px; padding: 6px 20px; border-top: 1px solid #dee2e6; }

/* Tables */
.grid { width: 100%; table-layout: fixed; border-collapse: separate; border-spacing: 0; }
.grid th, .grid td {
  height: 39px;
  padding: 0 0 6px 6px;
  border-top: 1px solid #dee2e6;
  text-align: left;
  vertical-align: middle;
  white-space: nowrap;
}
.grid th { background: #ebebeb; font-weight: 500; }
.grid th:first-child, .grid td:first-child { padding-left: 20px; }
.grid tbody tr:nth-child(even) { background: #fafafa; }
.grid .act { padding-bottom: 1px; }
.grid.feed td { height: 38px; padding-bottom: 5px; }
.num { font-size: 13px; }

.t-book col:nth-child(1) { width: 27.3%; }
.t-book col:nth-child(2) { width: 27.1%; }
.t-book col:nth-child(3) { width: 22.5%; }
.t-book col:nth-child(4) { width: 7.1%; }

.t-dev col:nth-child(1) { width: 25.9%; }
.t-dev col:nth-child(2) { width: 10.7%; }
.t-dev col:nth-child(3) { width: 4.4%; }
.t-dev col:nth-child(4) { width: 13.7%; }
.t-dev col:nth-child(5) { width: 17.1%; }

.t-state col:nth-child(1) { width: 15.9%; }
.t-state col:nth-child(2) { width: 19%; }
.t-state col:nth-child(3) { width: 4.8%; }
.t-state col:nth-child(4) { width: 11.5%; }
.t-state col:nth-child(5) { width: 6.5%; }
.t-state col:nth-child(6) { width: 4.8%; }
.t-state col:nth-child(7) { width: 6.5%; }
.t-state col:nth-child(8) { width: 12%; }

.t-msg col:nth-child(1) { width: 24.8%; }
.t-msg col:nth-child(2) { width: 21%; }
.t-notice col:nth-child(1) { width: 23.8%; }
.t-notice col:nth-child(2) { width: 14.9%; }

.btns { display: flex; gap: 3px; }
.btn { display: block; height: 22px; padding: 0 5px 2px; border-radius: 3px; line-height: 20px; color: #fff; }
.yellow { background: #ffc107; color: #1f2d3d; }
.teal { background: #17a2b8; }
.blue { background: #007bff; }
.gray { background: #6c757d; }
.green { background: #28a745; }

.note { display: flex; align-items: center; color: #007bff; }
.flag { flex: 0 0 21px; display: flex; }
.flag-end { justify-content: flex-end; padding-right: 2px; }
.orange { color: #fd7e14; }
.mint { color: #20c997; }

/* Redacted names: skewed streaks, softened at the edges */
.smudge {
  display: block;
  height: 21px;
  margin: 3px 0 0 6px;
  transform: skewX(38deg);
  filter: blur(1px);
  opacity: .75;
  background:
    linear-gradient(rgba(255, 255, 255, .6), rgba(255, 255, 255, 0) 40%, rgba(255, 255, 255, .7)),
    repeating-linear-gradient(90deg, #b4b4b4 0 2px, #d4d4d4 4px 5px, #8c8c8c 7px 9px, #c4c4c4 10px 12px, #a4a4a4 15px 17px, #e0e0e0 19px 21px, #bababa 23px 25px, #cccccc 28px 29px, #b4b4b4 31px);
}
.smudge-dark {
  margin: 0 7px;
  opacity: 1;
  background:
    linear-gradient(rgba(52, 58, 64, .6), rgba(52, 58, 64, 0) 40%, rgba(52, 58, 64, .7)),
    repeating-linear-gradient(90deg, #666c74 0 2px, #4c5258 4px 5px, #7b8188 7px 9px, #565c62 10px 12px, #6b7178 15px 17px, #454b51 19px 21px, #666c74 24px);
}
.w-name { width: 81px; }
.w-short { width: 34px; }
.w-mid { width: 86px; margin-left: 10px; }
.w-long { width: 96px; }
```
